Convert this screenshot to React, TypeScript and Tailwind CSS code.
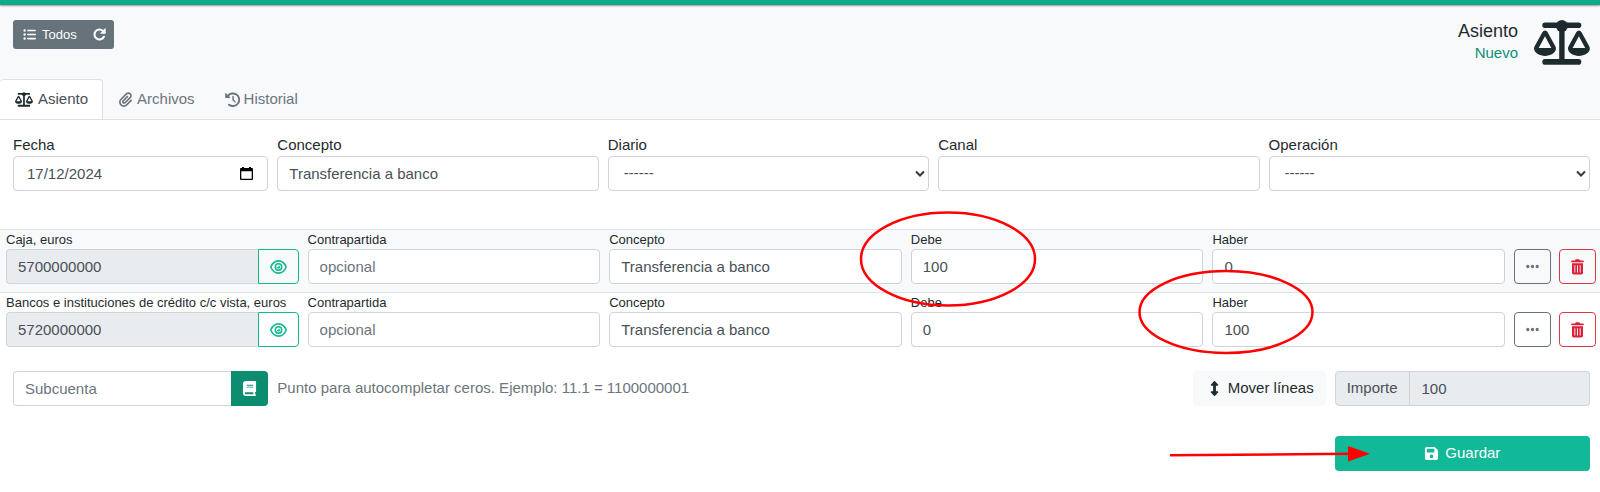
import { useState } from "react";
import type { ReactNode } from "react";
import {
  FaBook,
  FaEllipsis,
  FaFloppyDisk,
  FaListUl,
  FaPaperclip,
  FaUpDown,
} from "react-icons/fa6";

const control =
  "block h-[35px] w-full min-w-0 rounded-[4px] border border-[#ced4da] bg-white px-[11px] text-[15px] text-[#495057] placeholder:text-[#6c757d] placeholder:opacity-100";

type Line = {
  id: string;
  account: string;
  code: string;
  concept: string;
  debit: string;
  credit: string;
};

const lines: Line[] = [
  { id: "l1", account: "Caja, euros", code: "5700000000", concept: "Transferencia a banco", debit: "100", credit: "0" },
  {
    id: "l2",
    account: "Bancos e instituciones de crédito c/c vista, euros",
    code: "5720000000",
    concept: "Transferencia a banco",
    debit: "0",
    credit: "100",
  },
];

function ScaleIcon({ className }: { className?: string }) {
  return (
    <svg className={className} viewBox="0 0 56 45" fill="currentColor">
      <rect x="8.300" y="2.400" width="39" height="5.700" rx="2.800" />
      <rect x="8.300" y="39" width="39" height="5.700" rx="2.800" />
      <rect x="25.200" y="4" width="5.400" height="38" />
      <circle cx="27.900" cy="6" r="6" />
      <path d="M11 10.500q1.600 0 2.500 1.600l7.700 14q.9 1.600.7 3.200c-.8 3.800-5.300 6.600-10.900 6.600S.9 33.100.1 29.300q-.2-1.600.7-3.200l7.700-14q.9-1.600 2.500-1.600zM11 16.200 4.700 27.900h12.600z" fillRule="evenodd" />
      <path d="M44.900 10.500q1.600 0 2.500 1.600l7.700 14q.9 1.600.7 3.200c-.8 3.800-5.300 6.600-10.900 6.600s-10.100-2.800-10.900-6.600q-.2-1.600.7-3.200l7.700-14q.9-1.600 2.500-1.600zM44.900 16.200 38.600 27.900h12.600z" fillRule="evenodd" />
    </svg>
  );
}

function ReloadIcon() {
  return (
    <svg className="h-[13px] w-[13px]" viewBox="0 0 13 13">
      <path d="M10.900 8.800A5 5 0 1 1 9.800 2.700" fill="none" stroke="currentColor" strokeWidth="2.100" strokeLinecap="round" />
      <path d="M12.700.9v4.300q0 .6-.6.6H7.800q-.9 0-.3-.8L11.800.6q.9-.6.9.3z" fill="currentColor" />
    </svg>
  );
}

function HistoryIcon() {
  return (
    <svg className="h-[15px] w-[15px]" viewBox="0 0 15 15" fill="none" stroke="currentColor" strokeLinecap="round">
      <path d="M2.600 4.300A6.300 6.300 0 1 1 4 12.700" strokeWidth="1.900" />
      <path d="M8 4.400v3.300l2 2.200" strokeWidth="1.400" />
      <path d="M.2 1.200v4.200q0 .5.500.5h4.200q.8 0 .2-.6L.8.900Q.2.500.2 1.200z" fill="currentColor" stroke="none" />
    </svg>
  );
}

function EyeIcon() {
  return (
    <svg className="h-[14px] w-[17px]" viewBox="0 0 17 14" fill="none" stroke="currentColor">
      <path d="M.8 7C2.200 3.500 5 .9 8.500.9S14.800 3.500 16.200 7c-1.400 3.500-4.200 6.100-7.700 6.100S2.200 10.500.8 7z" strokeWidth="1.600" strokeLinejoin="round" />
      <circle cx="8.500" cy="7" r="3.200" strokeWidth="1.500" />
      <path d="M8.500 5.500v1.600H6.900A1.600 1.600 0 1 0 8.500 5.500z" fill="currentColor" stroke="none" />
    </svg>
  );
}

function TrashIcon() {
  return (
    <svg className="h-[16px] w-[13px]" viewBox="0 0 13 16" fill="currentColor">
      <path d="M4.200.9Q4.500.3 5.200.3h2.600q.7 0 1 .6l.2.500H12q.9 0 .9.900t-.9.900H1q-.9 0-.9-.9t.9-.9h3z" />
      <path d="M1 4.200h11v9.600q0 1.700-1.700 1.700H2.700Q1 15.500 1 13.800zM3.400 6.200v7.200h.9V6.200zM6.050 6.200v7.200h.9V6.200zM8.700 6.200v7.200h.9V6.200z" fillRule="evenodd" />
    </svg>
  );
}

function Field({ id, label, className, children }: { id: string; label: string; className?: string; children: ReactNode }) {
  return (
    <div className={className}>
      <label htmlFor={id} className="block leading-[23px]">
        {label}
      </label>
      {children}
    </div>
  );
}

function LineField({ id, label, children }: { id: string; label: string; children: ReactNode }) {
  return (
    <div className="relative min-w-0 flex-1">
      <label htmlFor={id} className="block truncate text-[13px] leading-[19px]">
        {label}
      </label>
      {children}
    </div>
  );
}

// Empty select with the dashed placeholder option
function EmptySelect({ id }: { id: string }) {
  return (
    <div className="relative">
      <select id={id} className={control + " appearance-none pl-[15px]"}>
        <option>------</option>
      </select>
      <svg
        className="pointer-events-none absolute top-[14px] right-1 h-2 w-[10px]"
        viewBox="0 0 10 8"
        fill="none"
        stroke="#343a40"
        strokeWidth="2"
      >
        <path d="M1 1.500 5 5.500 9 1.500" />
      </svg>
    </div>
  );
}

function EntryLine({ line, striped }: { line: Line; striped: boolean }) {
  return (
    <div
      className={
        "flex items-end gap-[9px] border-t border-[#dee2e6] pr-1 pb-2 pl-[6px] " + (striped ? "bg-[#f8f9fb]" : "")
      }
    >
      <LineField id={line.id + "-code"} label={line.account}>
        <div className="flex">
          <input
            id={line.id + "-code"}
            readOnly
            value={line.code}
            className="h-[35px] min-w-0 flex-1 rounded-l-[4px] border border-r-0 border-[#ced4da] bg-[#e9ecef] px-[11px] text-[15px] text-[#495057]"
          />
          <button
            type="button"
            aria-label="Ver subcuenta"
            className="flex h-[35px] w-[41px] items-center justify-center rounded-r-[4px] border border-[#11b992] text-[#11b992]"
          >
            <EyeIcon />
          </button>
        </div>
      </LineField>
      <LineField id={line.id + "-counter"} label="Contrapartida">
        <input id={line.id + "-counter"} placeholder="opcional" className={control} />
      </LineField>
      <LineField id={line.id + "-concept"} label="Concepto">
        <input id={line.id + "-concept"} defaultValue={line.concept} className={control} />
      </LineField>
      <LineField id={line.id + "-debit"} label="Debe">
        <input id={line.id + "-debit"} defaultValue={line.debit} className={control} />
        {line.debit !== "0" && (
          <svg
            className="pointer-events-none absolute -top-[20px] -left-[52px] z-10 h-[98px] w-[178px]"
            viewBox="0 0 178 98"
            fill="none"
            stroke="#ff0000"
            strokeWidth="2.500"
          >
            <ellipse cx="89" cy="49" rx="87" ry="46.500" />
          </svg>
        )}
      </LineField>
      <LineField id={line.id + "-credit"} label="Haber">
        <input id={line.id + "-credit"} defaultValue={line.credit} className={control} />
        {line.credit !== "0" && (
          <svg
            className="pointer-events-none absolute -top-[25px] -left-[75px] z-10 h-[88px] w-[178px]"
            viewBox="0 0 178 88"
            fill="none"
            stroke="#ff0000"
            strokeWidth="2.500"
          >
            <ellipse cx="89" cy="44" rx="86.500" ry="41" />
          </svg>
        )}
      </LineField>
      <div className="flex gap-2">
        <button
          type="button"
          aria-label="Más opciones"
          className="flex h-[35px] w-[37px] items-center justify-center rounded-[4px] border border-[#66737b] text-[#66737b]"
        >
          <FaEllipsis size={15} />
        </button>
        <button
          type="button"
          aria-label="Eliminar línea"
          className="flex h-[35px] w-[37px] items-center justify-center rounded-[4px] border border-[#dc3545] text-[#dc2038]"
        >
          <TrashIcon />
        </button>
      </div>
    </div>
  );
}

export default function App() {
  const [date, setDate] = useState("17/12/2024");

  return (
    <div className="bg-white font-['Liberation_Sans',Arial,sans-serif] text-[15px] text-[#1e2b2e]">
      {/* Brand bar */}
      <div className="relative h-[5px] bg-[#0fab89] shadow-[0_1px_2px_rgba(0,0,0,0.4)]" />

      <header className="bg-[#f8f9fb] pt-[15px]">
        <div className="flex items-start justify-between pr-[10px] pl-[13px]">
          <div className="flex h-[29px] rounded-[3px] bg-[#66737b] text-[13px] text-white">
            <a href="#todos" className="flex items-center gap-[6px] pr-2 pl-[10px]">
              <FaListUl size={13} />
              Todos
            </a>
            <button type="button" aria-label="Recargar" className="flex items-center px-2">
              <ReloadIcon />
            </button>
          </div>
          <div className="flex items-start gap-4">
            <div className="text-right">
              <h1 className="text-[18px] leading-[22px]">Asiento</h1>
              <p className="leading-[22px] text-[#0b8f72]">Nuevo</p>
            </div>
            <ScaleIcon className="h-[45px] w-[56px]" />
          </div>
        </div>

        {/* Tabs */}
        <nav className="mt-[14px] flex border-b border-[#dee2e6]">
          <a
            href="#asiento"
            className="-mb-px flex h-[40px] items-center gap-[5px] rounded-t-[4px] border border-b-0 border-l-0 border-[#dee2e6] bg-white pr-[14px] pl-[15px] text-[#495057]"
          >
            <ScaleIcon className="h-[15px] w-[18px] text-[#1e2b2e]" />
            Asiento
          </a>
          <a href="#archivos" className="flex h-[40px] items-center gap-1 px-[15px] text-[#6c757d]">
            <FaPaperclip size={15} />
            Archivos
          </a>
          <a href="#historial" className="flex h-[40px] items-center gap-1 px-[15px] text-[#6c757d]">
            <HistoryIcon />
            Historial
          </a>
        </nav>
      </header>

      <form onSubmit={(e) => e.preventDefault()}>
        <div className="grid grid-cols-24 gap-x-[9px] pt-[13px] pr-[10px] pb-[38px] pl-[13px]">
          <Field id="date" label="Fecha" className="col-span-4">
            <div className="relative">
              <input
                id="date"
                value={date}
                onChange={(e) => setDate(e.target.value)}
                className={control + " pl-[13px]"}
              />
              <button type="button" aria-label="Abrir calendario" className="absolute top-[11px] right-[15px]">
                <svg className="h-[13px] w-[13px]" viewBox="0 0 13 13" fill="#000">
                  <path d="M2 0h2v1h5V0h2v1h1q1 0 1 1v10q0 1-1 1H1q-1 0-1-1V2q0-1 1-1h1zM1.300 4.300v7.400h10.400V4.300z" fillRule="evenodd" />
                </svg>
              </button>
            </div>
          </Field>
          <Field id="concept" label="Concepto" className="col-span-5">
            <input id="concept" defaultValue="Transferencia a banco" className={control} />
          </Field>
          <Field id="journal" label="Diario" className="col-span-5">
            <EmptySelect id="journal" />
          </Field>
          <Field id="channel" label="Canal" className="col-span-5">
            <input id="channel" className={control} />
          </Field>
          <Field id="operation" label="Operación" className="col-span-5">
            <EmptySelect id="operation" />
          </Field>
        </div>

        {lines.map((line, i) => (
          <EntryLine key={line.id} line={line} striped={i % 2 === 0} />
        ))}

        {/* New line + totals */}
        <div className="grid grid-cols-24 items-center gap-x-[9px] pt-4 pr-[10px] pl-[13px]">
          <div className="col-span-4 flex">
            <input
              aria-label="Subcuenta"
              placeholder="Subcuenta"
              className="h-[35px] min-w-0 flex-1 rounded-l-[4px] border border-r-0 border-[#ced4da] px-[11px] text-[15px] placeholder:text-[#6c757d] placeholder:opacity-100"
            />
            <button
              type="button"
              aria-label="Buscar subcuenta"
              className="flex h-[35px] w-[37px] items-center justify-center rounded-r-[4px] bg-[#0c8d70] text-white"
            >
              <FaBook size={15} />
            </button>
          </div>
          <p className="col-span-10 text-[#6c757d]">Punto para autocompletar ceros. Ejemplo: 11.1 = 1100000001</p>
          <div className="col-span-6 flex justify-end">
            <button type="button" className="flex h-[35px] items-center gap-1 rounded-[4px] bg-[#f8f9fb] px-3">
              <span className="flex w-[19px] justify-center">
                <FaUpDown size={15} />
              </span>
              Mover líneas
            </button>
          </div>
          <div className="col-span-4 flex">
            <label
              htmlFor="amount"
              className="flex h-[35px] items-center rounded-l-[4px] border border-[#ced4da] bg-[#e9ecef] px-[11px] text-[#495057]"
            >
              Importe
            </label>
            <input
              id="amount"
              readOnly
              value="100"
              className="h-[35px] min-w-0 flex-1 rounded-r-[4px] border border-l-0 border-[#ced4da] bg-[#e9ecef] px-3 text-[15px] text-[#495057]"
            />
          </div>
        </div>

        <div className="grid grid-cols-24 gap-x-[9px] pt-[30px] pr-[10px] pb-5 pl-[13px]">
          <div className="relative col-span-4 col-start-21">
            <button
              type="submit"
              className="flex h-[35px] w-full items-center justify-center gap-[6px] rounded-[4px] bg-[#11b998] text-white"
            >
              <FaFloppyDisk size={15} />
              Guardar
            </button>
            <svg
              className="pointer-events-none absolute top-[8px] -left-[167px] h-[20px] w-[204px]"
              viewBox="0 0 204 20"
            >
              <path d="M2 11.300 184 9.700" stroke="#ff0000" strokeWidth="2.500" />
              <path d="M180 2v15.500l22-7.800z" fill="#ff0000" />
            </svg>
          </div>
        </div>
      </form>
    </div>
  );
}
